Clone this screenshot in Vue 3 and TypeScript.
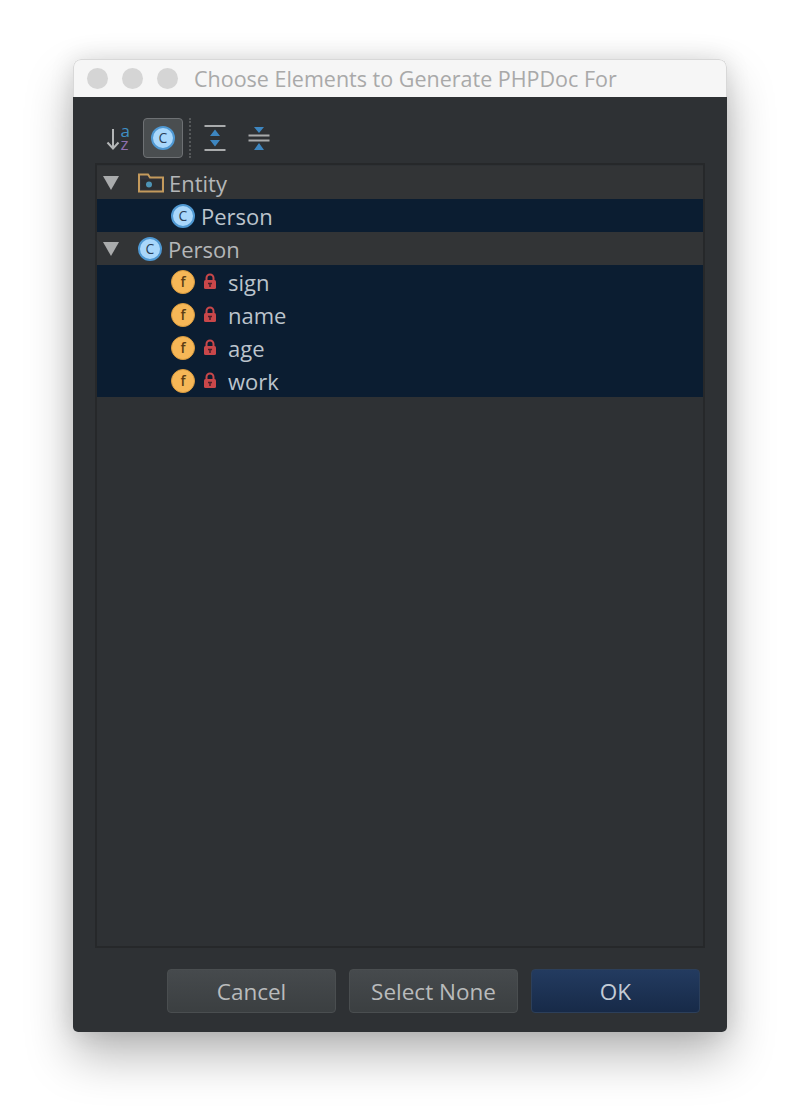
<script setup lang="ts">
interface Field { name: string }
const fields: Field[] = [{ name: 'sign' }, { name: 'name' }, { name: 'age' }, { name: 'work' }]
</script>

<template>
  <div class="page">
    <div class="window">
      <div class="titlebar">
        <span class="light"></span><span class="light"></span><span class="light"></span>
        <span class="title">Choose Elements to Generate PHPDoc For</span>
      </div>
      <div class="body">
        <div class="toolbar">
          <span class="tool sort">
            <svg width="28" height="30" viewBox="0 0 28 30">
              <path d="M8 6V25M2.5 19.5L8 25.500L13.500 19.500" fill="none" stroke="#b4b6b7" stroke-width="2" />
              <text x="15.500" y="14" class="az a">a</text>
              <text x="15.500" y="27" class="az z">z</text>
            </svg>
          </span>
          <span class="tool active">
            <span class="badge c">C</span>
          </span>
          <span class="sep"></span>
          <span class="tool expand">
            <svg width="24" height="28" viewBox="0 0 24 28">
              <path d="M1.500 2H22.500M1.500 26H22.500" stroke="#a9abac" stroke-width="2" />
              <path d="M12 5.500L17 12H7Z M12 22.500L7 16H17Z" fill="#3d86c0" />
            </svg>
          </span>
          <span class="tool collapse">
            <svg width="24" height="28" viewBox="0 0 24 28">
              <path d="M1.500 11.500H22.500M1.500 16.500H22.500" stroke="#a9abac" stroke-width="2" />
              <path d="M12 9L7 3H17Z M12 19L17 26H7Z" fill="#3d86c0" />
            </svg>
          </span>
        </div>

        <div class="tree">
          <div class="row">
            <span class="arrow"></span>
            <svg class="folder" width="26" height="20" viewBox="0 0 26 20">
              <path d="M1 18.500V1.500H10L12 4.500H25V18.500Z" fill="#33343a" stroke="#c49a5c" stroke-width="2" />
              <rect x="3" y="6.500" width="20" height="10" fill="#2c2d30" />
              <circle cx="11" cy="11.500" r="3" fill="#4d93b5" />
            </svg>
            <span class="label">Entity</span>
          </div>
          <div class="row selected child">
            <span class="badge c">C</span>
            <span class="label">Person</span>
          </div>
          <div class="row">
            <span class="arrow"></span>
            <span class="badge c top">C</span>
            <span class="label">Person</span>
          </div>
          <div v-for="f in fields" :key="f.name" class="row selected child">
            <span class="badge f">f</span>
            <svg class="lock" width="14" height="17" viewBox="0 0 14 17">
              <path d="M3.500 8V5a3.500 3.500 0 0 1 7 0V8" fill="none" stroke="#c9474a" stroke-width="2" />
              <rect x="1" y="7" width="12" height="9" rx="1.500" fill="#c9474a" />
              <path d="M5 10.500H9M7 10.500V14" stroke="#4a1f2a" stroke-width="1.500" />
            </svg>
            <span class="label field">{{ f.name }}</span>
          </div>
        </div>

        <div class="buttons">
          <button class="btn" type="button">Cancel</button>
          <button class="btn" type="button">Select None</button>
          <button class="btn primary" type="button">OK</button>
        </div>
      </div>
    </div>
  </div>
</template>

<style>
html, body { margin: 0; background: #ffffff; }
</style>

<style scoped>
.page {
  width: 800px;
  height: 1120px;
  padding: 59px 73px 0;
  box-sizing: border-box;
  overflow: hidden;
  font-family: "Open Sans", "DejaVu Sans", sans-serif;
}
.window {
  height: 973px;
  border-radius: 8px 8px 5px 5px;
  display: flex;
  flex-direction: column;
  box-shadow: 0 24px 48px rgba(0, 0, 0, 0.28), 0 0 24px rgba(0, 0, 0, 0.12);
  overflow: hidden;
}
.titlebar {
  height: 38px;
  flex: none;
  box-sizing: border-box;
  background: #f6f6f6;
  border: 1px solid #d8d8d8;
  border-bottom: 0;
  border-radius: 8px 8px 0 0;
  display: flex;
  align-items: center;
  padding-left: 13px;
  gap: 14px;
}
.light {
  width: 21px;
  height: 21px;
  border-radius: 50%;
  background: #d5d5d5;
}
.title {
  font-size: 21.500px;
  color: #a9a9a9;
  margin-left: 2px;
  white-space: nowrap;
}
.body {
  flex: 1;
  background: #2e3134;
  display: flex;
  flex-direction: column;
  padding: 0 22px 19px;
  min-height: 0;
}
.toolbar {
  height: 66px;
  flex: none;
  display: flex;
  align-items: center;
  padding: 19px 0 4px 9px;
  box-sizing: border-box;
}
.tool {
  display: flex;
  align-items: center;
  justify-content: center;
}
.sort { width: 30px; margin-right: 9px; }
.az { font-size: 17px; font-family: "Open Sans", sans-serif; }
.a { fill: #3f8fc4; }
.z { fill: #8f6fae; }
.active {
  width: 38px;
  height: 38px;
  border: 1px solid #6e7174;
  border-radius: 4px;
  background: #4a4e50;
}
.sep {
  width: 0;
  height: 40px;
  border-left: 2px dotted #55585a;
  margin: 0 12px 0 6px;
}
.expand { width: 24px; margin-right: 20px; }
.collapse { width: 24px; }
.tree {
  flex: 1;
  background: #2e3134;
  border: 2px solid #26282a;
  padding-top: 1px;
  min-height: 0;
}
.row {
  height: 33px;
  display: flex;
  align-items: center;
  background: #323436;
  box-sizing: border-box;
  padding-left: 6px;
}
.selected { background: #0b1d31; }
.child { padding-left: 74px; }
.arrow {
  width: 0;
  height: 0;
  border-left: 8px solid transparent;
  border-right: 8px solid transparent;
  border-top: 14px solid #a9abac;
  margin-right: 19px;
}
.folder { margin-right: 5px; flex: none; }
.badge {
  width: 24px;
  height: 24px;
  border-radius: 50%;
  flex: none;
  display: flex;
  align-items: center;
  justify-content: center;
  box-sizing: border-box;
  font-size: 14px;
  font-family: "Open Sans", sans-serif;
}
.c {
  background: #a9d7fb;
  border: 2px solid #4f98d2;
  color: #2a3f58;
}
.f {
  background: #f6b757;
  border: 1px solid #d99b3e;
  color: #5c3c14;
  font-weight: 600;
}
.top { margin-right: 6px; }
.row.child .c { margin-right: 6px; }
.lock { margin-left: 8px; margin-right: 11px; flex: none; }
.label {
  font-size: 22px;
  color: #b4b6b8;
  white-space: nowrap;
  line-height: 1;
}
.selected .label { color: #bcc4cc; }
.buttons {
  flex: none;
  display: flex;
  justify-content: flex-end;
  gap: 13px;
  padding: 21px 5px 0 0;
}
.btn {
  width: 169px;
  height: 44px;
  border: 1px solid #4a4e50;
  border-radius: 4px;
  background: linear-gradient(#464a4d, #3b3f41);
  color: #b9bbbc;
  font-size: 22.500px;
  font-family: "Open Sans", sans-serif;
  padding: 0;
}
.primary {
  background: linear-gradient(#233b60, #172a48);
  border-color: #2c3f5a;
  color: #c4ccd6;
}
</style>
